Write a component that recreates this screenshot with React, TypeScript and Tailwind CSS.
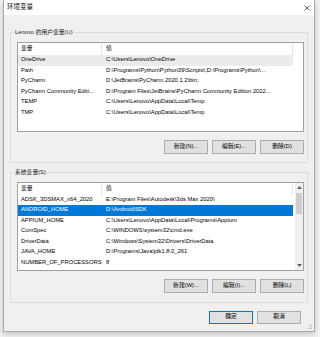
import React from 'react';

const userVars = [
  { name: 'OneDrive', value: 'C:\\Users\\Lenovo\\OneDrive', state: 'hover' },
  { name: 'Path', value: 'D:\\Programs\\Python\\Python39\\Scripts\\;D:\\Programs\\Python\\...' },
  { name: 'PyCharm', value: 'D:\\JetBrains\\PyCharm 2020.1.2\\bin;' },
  { name: 'PyCharm Community Editi...', value: 'D:\\Program Files\\JetBrains\\PyCharm Community Edition 2022...' },
  { name: 'TEMP', value: 'C:\\Users\\Lenovo\\AppData\\Local\\Temp' },
  { name: 'TMP', value: 'C:\\Users\\Lenovo\\AppData\\Local\\Temp' },
];

const systemVars = [
  { name: 'ADSK_3DSMAX_x64_2020', value: 'E:\\Program Files\\Autodesk\\3ds Max 2020\\' },
  { name: 'ANDROID_HOME', value: 'D:\\Android\\SDK', state: 'selected' },
  { name: 'APPIUM_HOME', value: 'C:\\Users\\Lenovo\\AppData\\Local\\Programs\\Appium' },
  { name: 'ComSpec', value: 'C:\\WINDOWS\\system32\\cmd.exe' },
  { name: 'DriverData', value: 'C:\\Windows\\System32\\Drivers\\DriverData' },
  { name: 'JAVA_HOME', value: 'D:\\Programs\\Java\\jdk1.8.0_261' },
  { name: 'NUMBER_OF_PROCESSORS', value: '8' },
];

type Row = { name: string; value: string; state?: string };

function Arrow({ down }: { down?: boolean }) {
  return (
    <div className="h-[9px] flex items-center justify-center shrink-0">
      <svg width="5" height="3" viewBox="0 0 5 3">
        {down ? <polygon points="0,0 5,0 2.5,3" fill="#606060" /> : <polygon points="0,3 5,3 2.5,0" fill="#606060" />}
      </svg>
    </div>
  );
}

function VarList({ rows, height, scroll }: { rows: Row[]; height: string; scroll?: boolean }) {
  return (
    <div className={`${height} bg-white border border-[#a0a0a0] flex overflow-hidden`}>
      <div className="w-[275px] flex flex-col shrink-0">
        {/* Header */}
        <div className="h-[12px] flex shrink-0">
          <div className="w-[84px] pl-[3px] flex items-center border-r border-[#e5e5e5]">变量</div>
          <div className="w-[191px] pl-[4px] flex items-center border-r border-[#e5e5e5]">值</div>
        </div>
        {rows.map((r) => (
          <div
            key={r.name}
            className={`h-[10.5px] flex items-center shrink-0 whitespace-nowrap ${
              r.state === 'selected' ? 'bg-[#0078d7] text-white' : r.state === 'hover' ? 'bg-[#ebebeb]' : ''
            }`}
          >
            <div className="w-[84px] pl-[3px] overflow-hidden">{r.name}</div>
            <div className="w-[191px] pl-[4px] overflow-hidden">{r.value}</div>
          </div>
        ))}
      </div>
      {scroll && (
        <div className="ml-auto w-[8px] bg-[#f0f0f0] flex flex-col">
          <Arrow />
          <div className="mt-[1px] mx-[1px] h-[21px] bg-[#cdcdcd]" />
          <div className="flex-1" />
          <Arrow down />
        </div>
      )}
    </div>
  );
}

function Btn({ children, primary }: { children: React.ReactNode; primary?: boolean }) {
  return (
    <button
      className={`w-[44px] h-[13.5px] flex items-center justify-center bg-[#e1e1e1] border ${
        primary ? 'border-[#0078d7]' : 'border-[#adadad]'
      }`}
    >
      {children}
    </button>
  );
}

function Group({ label, className, children }: { label: string; className: string; children: React.ReactNode }) {
  return (
    <fieldset className={`mx-[6px] border border-[#dcdcdc] pl-[6px] pr-[3px] pt-[5px] min-w-0 ${className}`}>
      <legend className="-ml-[3px] px-[1px] h-[9px] leading-[9px] text-[#1a1a1a]">{label}</legend>
      {children}
    </fieldset>
  );
}

export default function App() {
  return (
    <div className="w-[320px] h-[337px] bg-[#f2f2f2] pl-[3px] font-['Liberation_Sans','Noto_Sans_CJK_SC',sans-serif] text-[5.8px] leading-none text-black">
      <div className="relative w-[312px] h-[332px] flex flex-col bg-[#f0f0f0] border-x border-b border-[#a9a9a9] shadow-[0_2px_6px_rgba(0,0,0,0.2)]">
        {/* Title bar */}
        <div className="h-[15px] bg-white flex items-center justify-between pl-[3px] pr-[4px] shrink-0">
          <span className="text-[6.5px]">环境变量</span>
          <svg width="6" height="6" viewBox="0 0 6 6">
            <path d="M0.5 0.5 L5.5 5.5 M5.5 0.5 L0.5 5.5" stroke="#222" strokeWidth="0.7" />
          </svg>
        </div>

        <Group label="Lenovo 的用户变量(U)" className="mt-[13px] pb-[8px]">
          <VarList rows={userVars} height="h-[90px]" />
          <div className="flex justify-end gap-[4px] mt-[8px]">
            <Btn>新建(N)...</Btn>
            <Btn>编辑(E)...</Btn>
            <Btn>删除(D)</Btn>
          </div>
        </Group>

        <Group label="系统变量(S)" className="mt-[5px] pb-[9px]">
          <VarList rows={systemVars} height="h-[89px]" scroll />
          <div className="flex justify-end gap-[4px] mt-[8.5px]">
            <Btn>新建(W)...</Btn>
            <Btn>编辑(I)...</Btn>
            <Btn>删除(L)</Btn>
          </div>
        </Group>

        <div className="flex justify-end gap-[4px] pr-[13px] mt-[8px]">
          <Btn primary>确定</Btn>
          <Btn>取消</Btn>
        </div>

        {/* Resize grip */}
        <svg className="absolute right-[1px] bottom-[1px]" width="6" height="6" viewBox="0 0 6 6">
          <rect x="4" y="0" width="1" height="1" fill="#b0b0b0" />
          <rect x="2" y="2" width="1" height="1" fill="#b0b0b0" />
          <rect x="4" y="2" width="1" height="1" fill="#b0b0b0" />
          <rect x="0" y="4" width="1" height="1" fill="#b0b0b0" />
          <rect x="2" y="4" width="1" height="1" fill="#b0b0b0" />
          <rect x="4" y="4" width="1" height="1" fill="#b0b0b0" />
        </svg>
      </div>
    </div>
  );
}
